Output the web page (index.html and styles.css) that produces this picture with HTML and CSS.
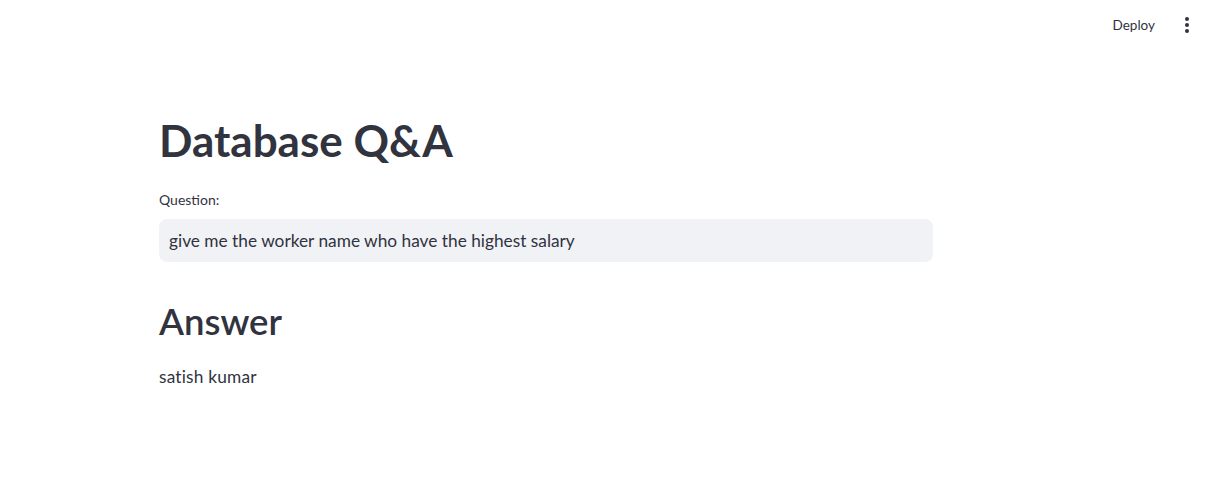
FILE: index.html
```html
<!DOCTYPE html>
<html lang="en">
<head>
<meta charset="utf-8">
<title>Database Q&amp;A</title>
<link rel="stylesheet" href="styles.css">
</head>
<body>
<header class="topbar">
  <span class="deploy">Deploy</span>
  <span class="menu">
    <svg width="24" height="24" viewBox="0 0 24 24" aria-hidden="true">
      <circle cx="12" cy="6" r="2" fill="#31333f"/>
      <circle cx="12" cy="12" r="2" fill="#31333f"/>
      <circle cx="12" cy="18" r="2" fill="#31333f"/>
    </svg>
  </span>
</header>
<main class="content">
  <h1 class="title">Database Q&amp;A</h1>
  <label class="label" for="q">Question:</label>
  <div class="input-wrap">
    <input id="q" class="input" type="text" value="give me the worker name who have the highest salary">
  </div>
  <h2 class="subtitle">Answer</h2>
  <p class="answer">satish kumar</p>
</main>
</body>
</html>
```

FILE: styles.css
```css
* { box-sizing: border-box; }
html, body {
  margin: 0;
  padding: 0;
  background: #ffffff;
  color: #31333f;
  font-family: Lato, "Liberation Sans", sans-serif;
}
.topbar {
  height: 50px;
  display: flex;
  align-items: center;
  justify-content: flex-end;
  padding-right: 23px;
  gap: 20px;
}
.deploy {
  font-size: 13.5px;
  line-height: 20px;
  color: #31333f;
}
.menu {
  display: flex;
  width: 24px;
  height: 24px;
}
.content {
  margin-left: 159px;
  width: 774px;
  display: flex;
  flex-direction: column;
}
.title {
  margin: 64px 0 0 0;
  font-size: 44px;
  line-height: 52px;
  font-weight: 700;
}
.label {
  margin-top: 24px;
  font-size: 14px;
  line-height: 20px;
}
.input-wrap {
  margin-top: 9px;
  height: 43px;
  background: #f0f2f6;
  border-radius: 8px;
  display: flex;
  align-items: center;
}
.input {
  width: 100%;
  border: none;
  background: transparent;
  outline: none;
  padding: 0 10px;
  font-family: inherit;
  font-size: 17.3px;
  line-height: 24px;
  color: #31333f;
}
.subtitle {
  margin: 37px 0 0 0;
  font-size: 36.5px;
  line-height: 44px;
  font-weight: 600;
}
.answer {
  margin: 22px 0 0 0;
  font-size: 17.3px;
  line-height: 24px;
  letter-spacing: 0.2px;
}
```
